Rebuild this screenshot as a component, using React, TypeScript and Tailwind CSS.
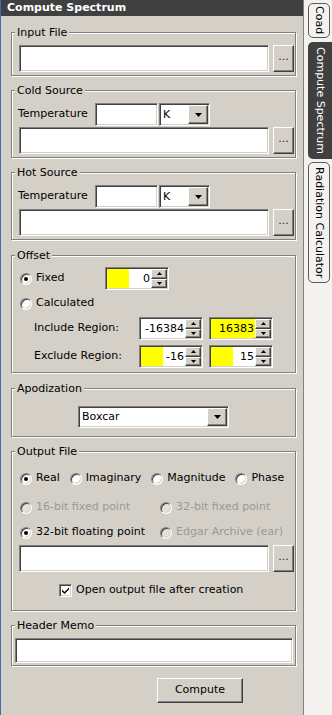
import React from "react";

const sunken =
  "border border-t-[#808080] border-l-[#808080] border-r-white border-b-white shadow-[inset_1px_1px_0_#404040,inset_-1px_-1px_0_#d4d0c8]";
const raised =
  "border border-t-white border-l-white border-r-[#404040] border-b-[#404040] shadow-[inset_-1px_-1px_0_#808080,inset_1px_1px_0_#d4d0c8]";

function Group({
  title,
  className,
  children,
}: {
  title: string;
  className: string;
  children?: React.ReactNode;
}) {
  return (
    <div
      className={`relative w-[285px] border border-[#808080] shadow-[inset_1px_1px_0_#fff,1px_1px_0_#fff] ${className}`}
    >
      <span className="absolute top-[-7px] left-[3px] bg-[#d4d0c8] px-[2px] leading-[13px]">
        {title}
      </span>
      {children}
    </div>
  );
}

function Browse() {
  return (
    <div
      className={`${raised} bg-[#d4d0c8] w-[21px] h-[27px] flex items-center justify-center leading-none pb-[4px] text-[#3a0a5a]`}
    >
      ...
    </div>
  );
}

function FileRow() {
  return (
    <div className="flex gap-[4px]">
      <div className={`${sunken} bg-white w-[250px] h-[27px]`} />
      <Browse />
    </div>
  );
}

function Arrow({ size = "big" }: { size?: "big" | "small"; }) {
  return size === "big" ? (
    <svg width="7" height="4" viewBox="0 0 7 4">
      <path d="M0 0h7L3.5 4z" fill="#000" />
    </svg>
  ) : (
    <svg width="5" height="3" viewBox="0 0 5 3">
      <path d="M0 0h5L2.5 3z" fill="#000" />
    </svg>
  );
}

function DropButton() {
  return (
    <div className={`${raised} bg-[#d4d0c8] w-[20px] h-full flex items-center justify-center`}>
      <Arrow />
    </div>
  );
}

function TempRow() {
  return (
    <div className="flex items-center h-[23px] pl-[6px]">
      <span className="w-[77px]">Temperature</span>
      <div className={`${sunken} bg-white w-[63px] h-[23px]`} />
      <div className={`${sunken} bg-white w-[51px] h-[23px] ml-[1px] p-[1px] flex`}>
        <span className="flex-1 pl-[2px] leading-[19px]">K</span>
        <DropButton />
      </div>
    </div>
  );
}

function Spinner({ value, hl, className }: { value: string; hl: "none" | "part" | "full"; className: string }) {
  return (
    <div className={`${sunken} bg-white h-[23px] p-[1px] flex ${className}`}>
      <div className={`flex-1 flex ${hl === "full" ? "bg-[#ffff00]" : ""}`}>
        {hl === "part" && <div className="w-[22px] h-full bg-[#ffff00]" />}
        <span className="flex-1 text-right pr-[1px] leading-[19px]">{value}</span>
      </div>
      <div className="w-[16px] flex flex-col">
        <div className={`${raised} bg-[#d4d0c8] flex-1 flex items-center justify-center`}>
          <svg width="5" height="3" viewBox="0 0 5 3">
            <path d="M2.5 0L5 3H0z" fill="#000" />
          </svg>
        </div>
        <div className={`${raised} bg-[#d4d0c8] flex-1 flex items-center justify-center`}>
          <Arrow size="small" />
        </div>
      </div>
    </div>
  );
}

function Radio({ checked, disabled }: { checked?: boolean; disabled?: boolean }) {
  return (
    <span
      className={`w-[12px] h-[12px] rounded-full border border-t-[#808080] border-l-[#808080] border-r-white border-b-white shadow-[inset_1px_1px_0_#404040,inset_-1px_-1px_0_#d4d0c8] ${
        disabled ? "bg-[#e4e1dc]" : "bg-white"
      } flex items-center justify-center shrink-0`}
    >
      {checked && <span className="w-[4px] h-[4px] rounded-full bg-black" />}
    </span>
  );
}

function Option({ label, checked, disabled }: { label: string; checked?: boolean; disabled?: boolean }) {
  return (
    <div className="flex items-center gap-[4px] h-[17px]">
      <Radio checked={checked} disabled={disabled} />
      <span className={disabled ? "text-[#9a9893]" : ""}>{label}</span>
    </div>
  );
}

export default function App() {
  return (
    <div className="w-[332px] h-[715px] flex bg-[#d4d0c8] font-['DejaVu_Sans',sans-serif] text-[11px] text-black overflow-hidden">
      {/* Main panel */}
      <div className="w-[304px] flex flex-col border-l border-l-[#3b6cb0] border-r border-r-[#808080]">
        <div className="h-[16px] bg-[#404040] text-white font-bold pl-[6px] leading-[16px]">
          Compute Spectrum
        </div>

        <div className="pl-[10px] flex flex-col">
          <Group title="Input File" className="mt-[16px] pt-[12px] pb-[3px] pl-[7px]">
            <FileRow />
          </Group>

          <Group title="Cold Source" className="mt-[14px] pt-[12px] pb-[3px]">
            <TempRow />
            <div className="pl-[7px] mt-[1px]">
              <FileRow />
            </div>
          </Group>

          <Group title="Hot Source" className="mt-[14px] pt-[12px] pb-[3px]">
            <TempRow />
            <div className="pl-[7px] mt-[1px]">
              <FileRow />
            </div>
          </Group>

          <Group title="Offset" className="mt-[15px] pt-[11px] pb-[4px] pl-[8px]">
            <div className="flex items-center h-[23px]">
              <div className="w-[85px]">
                <Option label="Fixed" checked />
              </div>
              <Spinner value="0" hl="part" className="w-[64px]" />
            </div>
            <div className="flex items-center h-[23px] mt-[2px]">
              <Option label="Calculated" />
            </div>
            <div className="flex items-center h-[23px] mt-[2px] pl-[14px]">
              <span className="w-[105px]">Include Region:</span>
              <Spinner value="-16384" hl="none" className="w-[64px]" />
              <Spinner value="16383" hl="full" className="w-[64px] ml-[6px]" />
            </div>
            <div className="flex items-center h-[23px] mt-[5px] pl-[14px]">
              <span className="w-[105px]">Exclude Region:</span>
              <Spinner value="-16" hl="part" className="w-[64px]" />
              <Spinner value="15" hl="part" className="w-[64px] ml-[6px]" />
            </div>
          </Group>

          <Group title="Apodization" className="mt-[15px] pt-[17px] pb-[8px] pl-[66px]">
            <div className={`${sunken} bg-white w-[151px] h-[22px] p-[1px] flex`}>
              <span className="flex-1 pl-[2px] leading-[18px]">Boxcar</span>
              <DropButton />
            </div>
          </Group>

          <Group title="Output File" className="mt-[14px] pt-[18px] pb-[11px] pl-[8px]">
            <div className="flex gap-[10px]">
              <Option label="Real" checked />
              <Option label="Imaginary" />
              <Option label="Magnitude" />
              <Option label="Phase" />
            </div>
            <div className="grid grid-cols-[140px_1fr] mt-[12px]">
              <Option label="16-bit fixed point" disabled />
              <Option label="32-bit fixed point" disabled />
            </div>
            <div className="grid grid-cols-[140px_1fr] mt-[8px]">
              <Option label="32-bit floating point" checked />
              <Option label="Edgar Archive (ear)" disabled />
            </div>
            <div className="mt-[4px] -ml-[1px]">
              <FileRow />
            </div>
            <div className="flex items-center gap-[4px] h-[17px] mt-[10px] pl-[39px]">
              <span className={`${sunken} bg-white w-[13px] h-[13px] flex items-center justify-center`}>
                <svg width="7" height="7" viewBox="0 0 7 7">
                  <path d="M0 2.5l2.5 2.5L7 0.5v2L2.5 7 0 4.5z" fill="#000" />
                </svg>
              </span>
              <span>Open output file after creation</span>
            </div>
          </Group>

          <Group title="Header Memo" className="mt-[14px] pt-[12px] pb-[2px] pl-[3px]">
            <div className={`${sunken} bg-white w-[278px] h-[25px]`} />
          </Group>

          <div
            className={`${raised} bg-[#d4d0c8] w-[86px] h-[25px] mt-[12px] ml-[146px] flex items-center justify-center`}
          >
            Compute
          </div>
        </div>
      </div>

      {/* Tab strip */}
      <div className="flex-1 bg-[#f4f2ee] flex flex-col pt-[3px] pl-[4px]">
        <div className="w-[22px] h-[35px] border border-[#5a5a5a] rounded-[5px] flex justify-center items-center [writing-mode:vertical-rl] leading-[14px]">
          Coad
        </div>
        <div className="h-[117px] mt-[4px] bg-[#404040] text-white rounded-l-[5px] flex justify-center items-center [writing-mode:vertical-rl] leading-[18px]">
          Compute Spectrum
        </div>
        <div className="w-[22px] h-[121px] mt-[3px] border border-[#5a5a5a] rounded-[5px] flex justify-center items-center [writing-mode:vertical-rl] leading-[14px]">
          Radiation Calculator
        </div>
      </div>
    </div>
  );
}
